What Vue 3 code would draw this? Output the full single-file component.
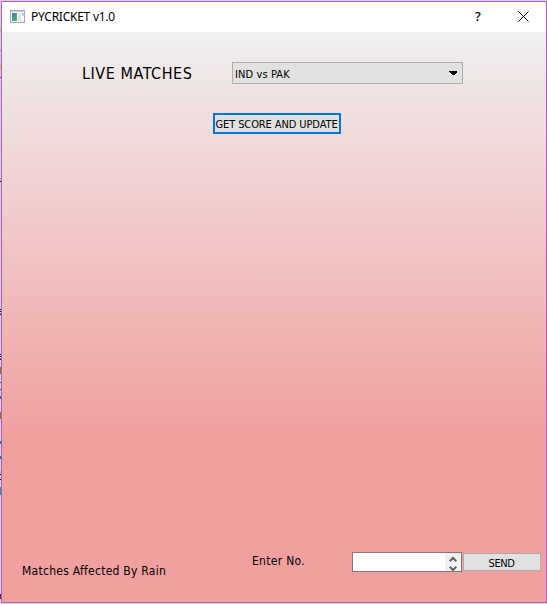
<script setup>
import { ref } from 'vue'

const matches = ['IND vs PAK']
const selected = ref(matches[0])
const edgeMarks = [
  { top: 30, height: 1, color: '#999' },
  { top: 50, height: 1, color: '#999' },
  { top: 63, height: 7, color: '#d8c060' },
  { top: 77, height: 1, color: '#555' },
  { top: 178, height: 2, color: '#e8a860' },
  { top: 181, height: 1, color: '#111' },
  { top: 309, height: 1, color: '#111' },
  { top: 311, height: 1, color: '#111' },
  { top: 313, height: 1, color: '#49c' },
  { top: 314, height: 1, color: '#111' },
  { top: 354, height: 1, color: '#111' },
  { top: 356, height: 1, color: '#111' },
  { top: 358, height: 1, color: '#49c' },
  { top: 359, height: 1, color: '#111' },
  { top: 367, height: 7, color: '#808000' },
  { top: 382, height: 1, color: '#008000' },
  { top: 389, height: 1, color: '#008000' },
  { top: 396, height: 3, color: '#008080' },
  { top: 412, height: 7, color: '#808000' },
  { top: 441, height: 3, color: '#008080' },
  { top: 456, height: 3, color: '#008080' },
  { top: 471, height: 2, color: '#e0b070' },
  { top: 474, height: 1, color: '#111' },
  { top: 479, height: 1, color: '#111' },
  { top: 487, height: 8, color: '#16a985' },
  { top: 594, height: 5, color: '#602040' },
]
</script>

<template>
  <div class="desktop">
    <i v-for="m in edgeMarks" :key="m.top" class="mark" :style="{ top: m.top + 'px', height: m.height + 'px', background: m.color }"></i>
    <div class="window">
      <header class="titlebar">
        <svg class="app-icon" width="15" height="13" viewBox="0 0 15 13">
          <defs>
            <linearGradient id="pane" x1="0" y1="0" x2="1" y2="1">
              <stop offset="0" stop-color="#4878a0" />
              <stop offset="1" stop-color="#58b878" />
            </linearGradient>
          </defs>
          <rect x=".5" y=".5" width="14" height="12" fill="#f6f6f6" stroke="#a4aab0" />
          <path d="M1 1.5h13" stroke="#c5d0da" />
          <rect x="2" y="3" width="5" height="8" fill="url(#pane)" />
          <rect x="8" y="3" width="3" height="8" fill="#e2e2e2" />
          <rect x="12" y="3" width="2" height="3" fill="#b4d4dc" />
        </svg>
        <span class="title">PYCRICKET v1.0</span>
        <span class="help">?</span>
        <svg class="close" width="11" height="11" viewBox="0 0 11 11">
          <path d="M.5 .5l10 10M10.5 .5l-10 10" stroke="#000" stroke-width="1" />
        </svg>
      </header>
      <main class="body">
        <div class="row-match">
          <span class="heading">LIVE MATCHES</span>
          <div class="combo">
            <span class="combo-text">{{ selected }}</span>
            <svg width="8" height="4" viewBox="0 0 8 4" shape-rendering="crispEdges"><path d="M0 0h8v1L5 4H3L0 1z" /></svg>
          </div>
        </div>
        <div class="button update"><span>GET SCORE AND UPDATE</span></div>
        <footer class="footer">
          <span class="rain">Matches Affected By Rain</span>
          <span class="enter">Enter No.</span>
          <div class="spin">
            <div class="arrows">
              <svg width="8" height="17" viewBox="0 0 8 17" fill="none" stroke="#606060" stroke-width="2">
                <path d="M.7 7.3L4 4l3.3 3.3M.7 12.7L4 16l3.3-3.3" />
              </svg>
            </div>
          </div>
          <div class="button send"><span>SEND</span></div>
        </footer>
      </main>
    </div>
  </div>
</template>

<style>
body { margin: 0; }
</style>

<style scoped>
* { box-sizing: border-box; }
.desktop {
  position: relative;
  width: 547px;
  height: 604px;
  padding: 1px 0 1px 1px;
  background: #d4d4d4;
  overflow: hidden;
  color: #000;
  font-family: "DejaVu Sans Condensed", "DejaVu Sans", sans-serif;
  font-stretch: condensed;
  white-space: nowrap;
}
.mark { position: absolute; left: 0; width: 1px; }
.window {
  display: flex;
  flex-direction: column;
  width: 546px;
  height: 602px;
  border: 1px solid #b45ac6;
}
.titlebar {
  display: flex;
  align-items: center;
  height: 30px;
  padding-left: 8px;
  background: #fff;
  font-family: "Noto Sans", sans-serif;
  font-stretch: normal;
  font-size: 12px;
}
.app-icon { margin-top: -2px; }
.title { width: 440px; margin: -2px 0 0 6px; letter-spacing: -0.25px; }
.help { width: 46px; margin: -2px 0 0 4px; font-size: 13px; font-weight: 500; }
.close { margin: -1px 0 0 -3px; }
.body {
  display: flex;
  flex-direction: column;
  flex: 1;
  background: linear-gradient(#f0f0f0 0, #f1a0a0 400px);
}
.row-match { display: flex; align-items: center; margin-top: 30px; padding-left: 80px; height: 22px; }
.heading { width: 150px; font-size: 16px; letter-spacing: 0.55px; }
.combo {
  display: flex;
  align-items: center;
  justify-content: space-between;
  width: 231px;
  height: 22px;
  padding: 0 5px 0 2px;
  border: 1px solid #adadad;
  background: #e1e1e1;
  font-size: 11px;
}
.combo-text { margin-top: 2px; letter-spacing: 0.1px; }
.button {
  display: flex;
  align-items: center;
  justify-content: center;
  border: 1px solid #adadad;
  background: #e1e1e1;
  font-size: 11px;
}
.update { width: 128px; height: 21px; margin: 29px 0 0 211px; border: 2px solid #0078d7; }
.update span { letter-spacing: -0.1px; margin: 1px 1px 0 0; }
.footer { display: flex; height: 50px; margin-top: auto; padding-left: 20px; font-size: 12px; }
.rain { width: 230px; margin-top: 12px; letter-spacing: 0.26px; }
.enter { width: 100px; margin-top: 2px; letter-spacing: 0.3px; }
.spin { display: flex; justify-content: flex-end; width: 110px; height: 20px; border: 1px solid #7a7a7a; background: #fff; }
.arrows { display: flex; justify-content: center; width: 16px; padding-top: 1px; background: #f0f0f0; }
.send { width: 78px; height: 18px; margin: 1px 0 0 1px; }
.send span { margin: 2px 1px 0 0; letter-spacing: -0.4px; }
</style>
